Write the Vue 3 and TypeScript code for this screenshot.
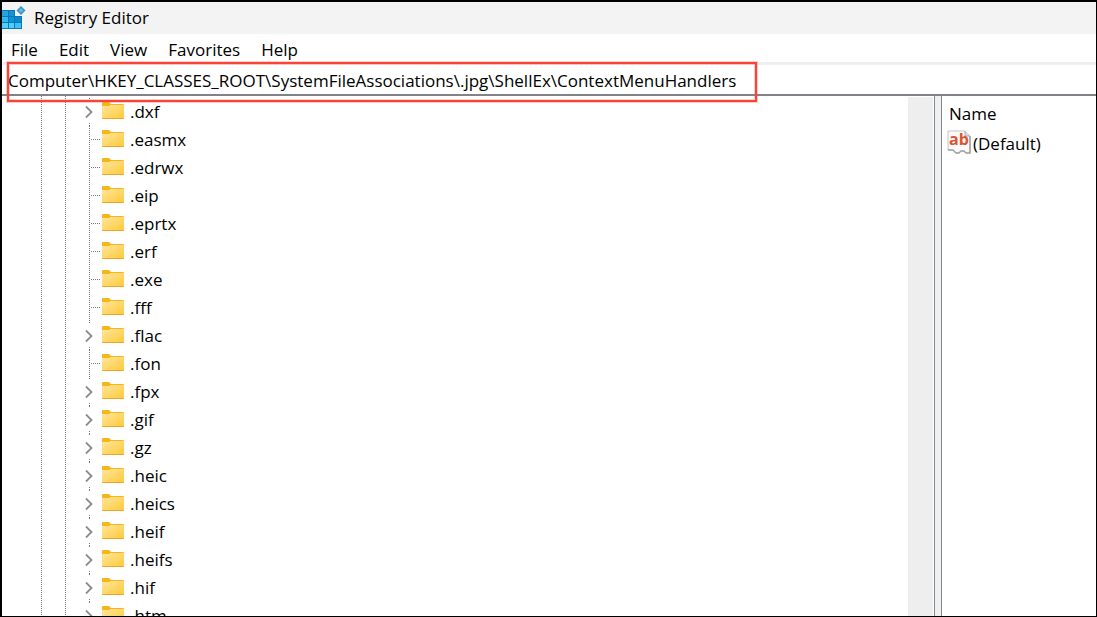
<script setup lang="ts">
import { ref } from 'vue'

interface RegistryKey {
  name: string
  expandable: boolean
}

const menus: string[] = ['File', 'Edit', 'View', 'Favorites', 'Help']

const address = ref('Computer\\HKEY_CLASSES_ROOT\\SystemFileAssociations\\.jpg\\ShellEx\\ContextMenuHandlers')

const keys: RegistryKey[] = [
  { name: '.dxf', expandable: true },
  { name: '.easmx', expandable: false },
  { name: '.edrwx', expandable: false },
  { name: '.eip', expandable: false },
  { name: '.eprtx', expandable: false },
  { name: '.erf', expandable: false },
  { name: '.exe', expandable: false },
  { name: '.fff', expandable: false },
  { name: '.flac', expandable: true },
  { name: '.fon', expandable: false },
  { name: '.fpx', expandable: true },
  { name: '.gif', expandable: true },
  { name: '.gz', expandable: true },
  { name: '.heic', expandable: true },
  { name: '.heics', expandable: true },
  { name: '.heif', expandable: true },
  { name: '.heifs', expandable: true },
  { name: '.hif', expandable: true },
  { name: '.htm', expandable: true },
]
</script>

<template>
  <div class="window">
    <header class="titlebar">
      <svg class="app-icon" viewBox="0 0 24 24" aria-hidden="true">
        <path d="M0 4h13v6h7v13H0z" fill="#0a78b8" />
        <rect x="0" y="5" width="6" height="5" fill="#25a5e0" />
        <rect x="7" y="5" width="5" height="5" fill="#1593d2" />
        <rect x="0" y="11" width="6" height="5" fill="#35b8ee" />
        <rect x="7" y="11" width="5" height="5" fill="#0f94d2" />
        <rect x="13" y="11" width="6" height="5" fill="#0b8ac8" />
        <rect x="0" y="17" width="6" height="5" fill="#4fd0fb" />
        <rect x="7" y="17" width="5" height="5" fill="#4fd0fb" />
        <rect x="13" y="17" width="6" height="5" fill="#3cc3f6" />
        <path d="M19 0l4.500 4.500-4.500 4.500-4.500-4.500z" fill="#3a92c4" />
        <path d="M19 2l2.500 2.500-2.500 2.500-2.500-2.500z" fill="#5cb9e6" />
      </svg>
      <h1 class="title">Registry Editor</h1>
    </header>

    <nav class="menubar" aria-label="Main menu">
      <button v-for="menu in menus" :key="menu" type="button" class="menu">{{ menu }}</button>
    </nav>

    <div class="addressbar">
      <input v-model="address" class="address" type="text" aria-label="Address" spellcheck="false" />
      <div class="highlight"></div>
    </div>

    <main class="panes">
      <section class="tree-pane">
        <ul class="tree" role="tree" aria-label="Registry keys">
          <li v-for="key in keys" :key="key.name" class="row" role="treeitem">
            <span class="branch" :class="{ parent: key.expandable }">
              <button v-if="key.expandable" type="button" class="expander" :aria-label="'Expand ' + key.name">
                <svg viewBox="0 0 8 12" aria-hidden="true">
                  <path d="M1 0.500l5.500 5.500-5.500 5.500" fill="none" stroke="#8c8c8c" stroke-width="1.800" />
                </svg>
              </button>
            </span>
            <svg class="folder" viewBox="0 0 22 17" aria-hidden="true">
              <defs>
                <linearGradient id="folder-face" x1="0" y1="0" x2="1" y2="1">
                  <stop offset="0" stop-color="#ffe69c" />
                  <stop offset="1" stop-color="#fdca3c" />
                </linearGradient>
              </defs>
              <path d="M0 1q0-1 1-1h6l2 2h12q1 0 1 1v4H0z" fill="#f6b51b" />
              <path d="M0 4h7l2-1h13v13H0z" fill="url(#folder-face)" />
              <path d="M0 16h22q0 1-1 1H1q-1 0-1-1z" fill="#e9a62a" />
            </svg>
            <span class="key">{{ key.name }}</span>
          </li>
        </ul>
        <div class="scroll-track"></div>
      </section>

      <div class="splitter"></div>

      <section class="value-pane">
        <table class="values">
          <thead>
            <tr><th scope="col">Name</th></tr>
          </thead>
          <tbody>
            <tr>
              <td>
                <span class="value">
                  <svg class="value-icon" viewBox="0 0 24 24" aria-hidden="true">
                    <path d="M1 1h17l5 5v17h-4l-2-2h-3l-2 2H9l-3-3H1z" fill="#fafafa" stroke="#c4c4c4" />
                    <path d="M1 20h5l3 3h3l2-2h3l2 2h4V6" fill="none" stroke="#a2a2a2" stroke-width="1.500" />
                    <path d="M18 1v5h5" fill="#dedede" stroke="#a8a8a8" />
                    <text x="2" y="15" class="glyph">ab</text>
                  </svg>
                  <span>(Default)</span>
                </span>
              </td>
            </tr>
          </tbody>
        </table>
      </section>
    </main>
  </div>
</template>

<style>
body {
  margin: 0;
}
</style>

<style scoped>
.window {
  box-sizing: border-box;
  display: flex;
  flex-direction: column;
  height: 100vh;
  overflow: hidden;
  border: 1px solid #000;
  border-top-width: 2px;
  border-left-width: 2px;
  background: #fff;
  color: #000;
  font: 17px/28px "Open Sans", "Noto Sans", sans-serif;
}

button,
input {
  margin: 0;
  padding: 0;
  border: 0;
  background: none;
  color: inherit;
  font: inherit;
}

.titlebar {
  display: flex;
  flex: none;
  align-items: center;
  gap: 8px;
  height: 32px;
  background: #f3f3f3;
}

.app-icon {
  width: 24px;
  height: 24px;
}

.title {
  margin: 0;
  font-size: 17px;
  font-weight: 400;
}

.menubar {
  box-sizing: border-box;
  display: flex;
  flex: none;
  gap: 21px;
  padding: 2px 9px 0;
  height: 31px;
  border-bottom: 3px solid #f0f0f0;
}

.addressbar {
  position: relative;
  flex: none;
  height: 29px;
  border-bottom: 2px solid #828389;
}

.address {
  box-sizing: border-box;
  display: block;
  width: 100%;
  height: 29px;
  padding: 2px 6px 0;
  outline: 0;
}

.highlight {
  position: absolute;
  top: -3px;
  left: 5px;
  box-sizing: border-box;
  width: 750px;
  height: 40px;
  border: 2px solid #fb4336;
  box-shadow: 0 0 0 1px #fb433640, inset 0 0 0 1px #fb433640;
  pointer-events: none;
}

.panes {
  display: flex;
  flex: 1;
  min-height: 0;
}

.tree-pane {
  display: flex;
  flex: 1;
  min-width: 0;
  overflow: hidden;
}

.tree {
  flex: 1;
  margin: 0;
  padding: 2px 0 0 39px;
  list-style: none;
  background:
    repeating-linear-gradient(#777 0 1px, #fff 1px 2px) 39px 0 / 1px 100% no-repeat,
    repeating-linear-gradient(#777 0 1px, #fff 1px 2px) 63px 0 / 1px 100% no-repeat;
}

.row {
  display: flex;
  height: 28px;
}

.branch {
  display: flex;
  align-items: center;
  box-sizing: border-box;
  width: 61px;
  padding-left: 44px;
  background:
    repeating-linear-gradient(#777 0 1px, #fff 1px 2px) 48px 0 / 1px 100% no-repeat,
    repeating-linear-gradient(90deg, #777 0 1px, #fff 1px 2px) 50px 13px / 9px 1px no-repeat;
}

.branch.parent {
  background:
    repeating-linear-gradient(#777 0 1px, #fff 1px 2px) 48px 0 / 1px 1px no-repeat,
    repeating-linear-gradient(#777 0 1px, #fff 1px 2px) 48px 25px / 1px 3px no-repeat;
}

.expander {
  display: flex;
}

.expander svg {
  width: 8px;
  height: 12px;
}

.folder {
  width: 22px;
  height: 17px;
  margin: 4px 6px 0 0;
}

.scroll-track {
  width: 25px;
  margin: 1px 1px 0 0;
  background: #eee;
}

.splitter {
  flex: none;
  width: 6px;
  border: solid #828790;
  border-width: 0 1px;
  background: #f0f0f0;
}

.value-pane {
  flex: none;
  width: 154px;
}

.values {
  border-collapse: collapse;
}

.values th {
  padding: 4px 7px 0;
  font-weight: 400;
  text-align: left;
}

.values td {
  padding: 2px 5px 0;
}

.value {
  display: flex;
  gap: 2px;
}

.value-icon {
  width: 24px;
  height: 24px;
}

.glyph {
  fill: #dc5430;
  font: 700 16px "Open Sans", sans-serif;
}
</style>
